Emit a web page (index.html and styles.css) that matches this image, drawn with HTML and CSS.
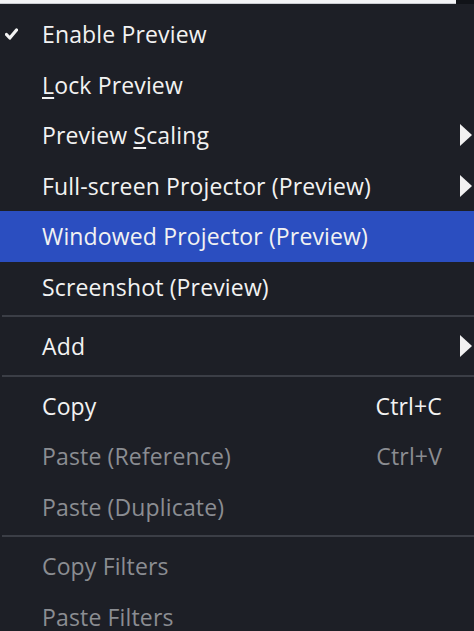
FILE: index.html
```html
<!DOCTYPE html>
<html>
<head>
<meta charset="utf-8">
<link rel="stylesheet" href="styles.css">
</head>
<body>
<div class="topbar"><div class="topwhite"></div><div class="topdark"></div></div>
<div class="menu">
  <div class="item">
    <span class="check"><svg width="13" height="12" viewBox="0 0 13 12"><path d="M1.5 6.5 L4.8 10 L11.5 2" fill="none" stroke="#f2f2f2" stroke-width="3.2" stroke-linecap="round" stroke-linejoin="round"/></svg></span>
    <span class="label">Enable Preview</span>
  </div>
  <div class="item"><span class="label"><u>L</u>ock Preview</span></div>
  <div class="item"><span class="label">Preview <u>S</u>caling</span><span class="arrow"></span></div>
  <div class="item"><span class="label">Full-screen Projector (Preview)</span><span class="arrow"></span></div>
  <div class="item active"><span class="label">Windowed Projector (Preview)</span></div>
  <div class="item"><span class="label">Screenshot (Preview)</span></div>
  <div class="sep"></div>
  <div class="item"><span class="label">Add</span><span class="arrow"></span></div>
  <div class="sep"></div>
  <div class="item"><span class="label">Copy</span><span class="shortcut">Ctrl+C</span></div>
  <div class="item disabled"><span class="label">Paste (Reference)</span><span class="shortcut">Ctrl+V</span></div>
  <div class="item disabled"><span class="label">Paste (Duplicate)</span></div>
  <div class="sep"></div>
  <div class="item disabled"><span class="label">Copy Filters</span></div>
  <div class="item disabled"><span class="label">Paste Filters</span></div>
</div>
</body>
</html>
```

FILE: styles.css
```css
html, body {
  margin: 0;
  padding: 0;
  background: #1d1f26;
  overflow: hidden;
}
body {
  width: 474px;
  height: 631px;
  font-family: "Open Sans", "Noto Sans", sans-serif;
  font-size: 23px;
  letter-spacing: 0.15px;
  color: #f2f2f2;
}
.topbar {
  display: flex;
  height: 4px;
}
.topwhite {
  width: 456px;
  background: #f3f4f6;
  border-bottom: 1px solid #c9cbd0;
  box-sizing: border-box;
}
.topdark {
  flex: 1;
  background: #111318;
}
.menu {
  display: flex;
  flex-direction: column;
  padding-top: 5px;
}
.item {
  position: relative;
  display: flex;
  align-items: center;
  height: 50.5px;
  padding-left: 42px;
  padding-right: 32px;
  box-sizing: border-box;
  white-space: nowrap;
}
.item.active {
  background: #2b4ec0;
}
.item.disabled {
  color: #8b8d92;
}
.label {
  flex: 1;
}
.label u {
  text-decoration-thickness: 2px;
  text-underline-offset: 3px;
}
.shortcut {
  margin-left: 20px;
}
.check {
  position: absolute;
  left: 5px;
  top: 50%;
  margin-top: -6px;
  display: flex;
}
.arrow {
  position: absolute;
  right: 2px;
  top: 50%;
  margin-top: -11px;
  width: 0;
  height: 0;
  border-top: 11px solid transparent;
  border-bottom: 11px solid transparent;
  border-left: 12px solid #f2f2f2;
}
.sep {
  height: 2px;
  margin: 3px 0 4px 2px;
  background: #3b3e46;
}
```
